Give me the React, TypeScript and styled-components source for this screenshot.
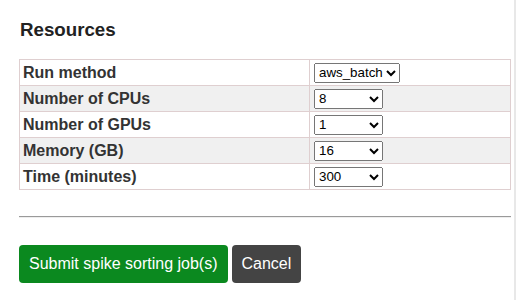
import React from "react";
import styled, { createGlobalStyle } from "styled-components";

const Global = createGlobalStyle`
  html, body { margin: 0; padding: 0; background: #fff; }
  body { font-family: "Liberation Sans", Arial, sans-serif; color: #333; }
`;

const Frame = styled.div`
  box-sizing: border-box;
  width: 516px;
  min-height: 300px;
  padding: 19px 3px 0 19px;
  border-right: 2px solid #e8e8e8;
`;

const Heading = styled.h3`
  margin: 0 0 18px 1px;
  font-size: 18.72px;
  font-weight: bold;
  color: #222;
  line-height: 22px;
`;

const Table = styled.table`
  width: 100%;
  border-collapse: collapse;
  font-size: 16px;
`;

const Row = styled.tr<{ $shaded: boolean }>`
  background: ${(p) => (p.$shaded ? "#f0f0f0" : "#fff")};
`;

const LabelCell = styled.td`
  width: 290px;
  height: 26px;
  padding: 0 3px;
  border: 1px solid #dfcfd0;
  font-weight: bold;
  color: #333;
  box-sizing: border-box;
`;

const ValueCell = styled.td`
  height: 26px;
  padding: 0 4px;
  border: 1px solid #dfcfd0;
  box-sizing: border-box;
`;

const Select = styled.select<{ $w?: number }>`
  font-family: "Liberation Sans", Arial, sans-serif;
  font-size: 13.333px;
  color: #000;
  height: 20px;
  margin: 0;
  vertical-align: middle;
  ${(p) => (p.$w ? `width: ${p.$w}px;` : "")}
`;

const Rule = styled.hr`
  margin: 26px 0 27px 0;
  border: none;
  border-top: 1px solid #9a9a9a;
  border-bottom: 1px solid #eeeeee;
  height: 0;
`;

const Actions = styled.div`
  display: flex;
  gap: 4px;
`;

const Button = styled.button<{ $variant: "primary" | "secondary" }>`
  font-family: "Liberation Sans", Arial, sans-serif;
  font-size: 16px;
  color: #fff;
  background: ${(p) => (p.$variant === "primary" ? "#0b891f" : "#444444")};
  border: none;
  border-radius: 4px;
  height: 38px;
  padding: 0 10px;
  cursor: pointer;
`;

const rows: { label: string; value: string; options: string[]; w?: number }[] = [
  { label: "Run method", value: "aws_batch", options: ["local", "aws_batch"] },
  { label: "Number of CPUs", value: "8", options: ["1", "2", "4", "8", "16"], w: 69 },
  { label: "Number of GPUs", value: "1", options: ["0", "1", "2"], w: 69 },
  { label: "Memory (GB)", value: "16", options: ["4", "8", "16", "32"], w: 69 },
  { label: "Time (minutes)", value: "300", options: ["60", "120", "300", "600"], w: 69 },
];

export default function App() {
  return (
    <>
      <Global />
      <Frame>
        <Heading>Resources</Heading>
        <Table>
          <tbody>
            {rows.map((r, i) => (
              <Row key={r.label} $shaded={i % 2 === 1}>
                <LabelCell>{r.label}</LabelCell>
                <ValueCell>
                  <Select $w={r.w} defaultValue={r.value}>
                    {r.options.map((o) => (
                      <option key={o} value={o}>
                        {o}
                      </option>
                    ))}
                  </Select>
                </ValueCell>
              </Row>
            ))}
          </tbody>
        </Table>
        <Rule />
        <Actions>
          <Button $variant="primary">Submit spike sorting job(s)</Button>
          <Button $variant="secondary">Cancel</Button>
        </Actions>
      </Frame>
    </>
  );
}
